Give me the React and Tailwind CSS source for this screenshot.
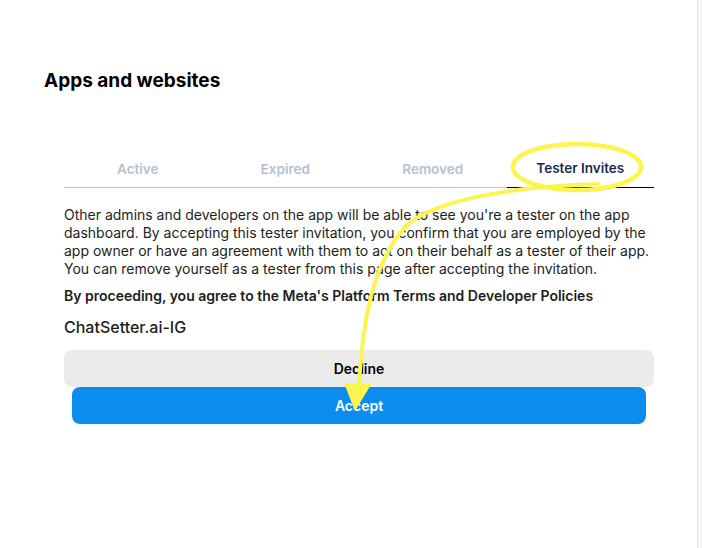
import React from 'react';

const tabs = ['Active', 'Expired', 'Removed', 'Tester Invites'];

const App = () => {
  const selected = 'Tester Invites';

  return (
    <div className="relative flex min-h-[548px] w-[702px] bg-white font-['Inter','Liberation_Sans',sans-serif]">
      <div className="flex-1 pl-[44px] pt-[69px]">
        <h1 className="text-[19px] font-bold leading-[24px] text-black">Apps and websites</h1>

        <div className="ml-[20px] mt-[58px] w-[590px]">
          {/* Tabs */}
          <div className="grid grid-cols-4 border-b border-[#c4c4c4]">
            {tabs.map((t) => (
              <div
                key={t}
                className={`-mb-px flex h-[37px] items-center justify-center pb-px text-[13.5px] font-semibold ${
                  t === selected ? 'border-b border-black text-[#1c2b4a]' : 'text-[#b4c2d0]'
                }`}
              >
                {t}
              </div>
            ))}
          </div>

          <p className="mt-[18px] text-[14px] leading-[18px] text-[#1c1e21]">
            Other admins and developers on the app will be able to see you're a tester on the app
            dashboard. By accepting this tester invitation, you confirm that you are employed by the
            app owner or have an agreement with them to act on their behalf as a tester of their app.
            You can remove yourself as a tester from this page after accepting the invitation.
          </p>
          <p className="mt-[9px] text-[14px] font-semibold leading-[18px] text-[#1c1e21]">
            By proceeding, you agree to the Meta's Platform Terms and Developer Policies
          </p>
          <div className="mt-[11px] text-[16px] font-medium leading-[22px] text-[#1c1e21]">ChatSetter.ai-IG</div>

          <div className="mt-[12px] flex flex-col items-center">
            <button className="h-[37px] w-full rounded-lg bg-[#ebebeb] text-[14px] font-semibold text-black">
              Decline
            </button>
            <button className="h-[37px] w-[574px] rounded-lg bg-[#0b8def] text-[14px] font-semibold text-white">
              Accept
            </button>
          </div>
        </div>
      </div>

      {/* right edge of window */}
      <div className="w-[5px] border-l border-[#e2e2e2] bg-[#f7f7f7]" />

      {/* yellow annotation */}
      <svg className="pointer-events-none absolute left-0 top-0" width="702" height="548" viewBox="0 0 702 548">
        <ellipse cx="577" cy="167" rx="64" ry="23" fill="none" stroke="#fcf54e" strokeWidth="4.5" />
        <path
          d="M 598 184 C 515 186, 435 200, 407 225 C 383 250, 371 290, 366 320 C 362 345, 360 365, 359 385"
          fill="none"
          stroke="#fcf54e"
          strokeWidth="4"
          strokeLinecap="round"
        />
        <polygon points="344,383 372,383 355,411" fill="#fcf54e" />
      </svg>
    </div>
  );
};

export default App;
